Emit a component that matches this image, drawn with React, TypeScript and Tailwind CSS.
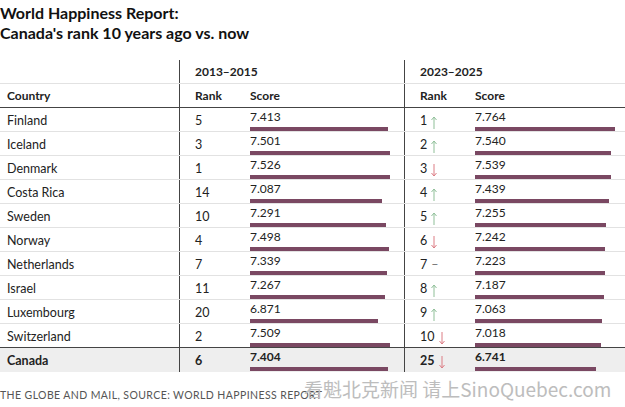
const rows = [
  { country: "Finland", r1: "5", s1: 7.413, r2: "1", t: "up", s2: 7.764 },
  { country: "Iceland", r1: "3", s1: 7.501, r2: "2", t: "up", s2: 7.54 },
  { country: "Denmark", r1: "1", s1: 7.526, r2: "3", t: "down", s2: 7.539 },
  { country: "Costa Rica", r1: "14", s1: 7.087, r2: "4", t: "up", s2: 7.439 },
  { country: "Sweden", r1: "10", s1: 7.291, r2: "5", t: "up", s2: 7.255 },
  { country: "Norway", r1: "4", s1: 7.498, r2: "6", t: "down", s2: 7.242 },
  { country: "Netherlands", r1: "7", s1: 7.339, r2: "7", t: "same", s2: 7.223 },
  { country: "Israel", r1: "11", s1: 7.267, r2: "8", t: "up", s2: 7.187 },
  { country: "Luxembourg", r1: "20", s1: 6.871, r2: "9", t: "up", s2: 7.063 },
  { country: "Switzerland", r1: "2", s1: 7.509, r2: "10", t: "down", s2: 7.018 },
];

const Trend = ({ t }: { t: string }) => {
  if (t === "same") {
    return <span className="ml-[4px] text-[#777]">–</span>;
  }
  const up = t === "up";
  return (
    <svg width="6" height="13" viewBox="0 0 6 13" className="ml-[4px] mt-[2px]">
      {up ? (
        <>
          <line x1="3" y1="1" x2="3" y2="13" stroke="#8fbf98" strokeWidth="1" />
          <polyline points="0.5,4 3,1 5.5,4" fill="none" stroke="#8fbf98" strokeWidth="1" />
        </>
      ) : (
        <>
          <line x1="3" y1="0" x2="3" y2="12" stroke="#dc7c84" strokeWidth="1" />
          <polyline points="0.5,9 3,12 5.5,9" fill="none" stroke="#dc7c84" strokeWidth="1" />
        </>
      )}
    </svg>
  );
};

const Score = ({ value, scale, bold }: { value: number; scale: number; bold?: boolean }) => (
  <div className="flex flex-col pt-[2px]">
    <span className={`leading-[14px] text-[12px] ${bold ? "font-bold" : ""}`}>{value.toFixed(3)}</span>
    <div className="mt-[3px] h-[4px] bg-[#7a4862]" style={{ width: value * scale }} />
  </div>
);

const Row = ({
  row,
  last,
  canada,
}: {
  row: (typeof rows)[number];
  last?: boolean;
  canada?: boolean;
}) => (
  <div
    className={`flex h-6 ${canada ? "bg-[#eeeeee] font-bold" : "border-b"} ${
      last ? "border-[#444]" : "border-[#e2e2e2]"
    }`}
  >
    <div className="w-[179px] pl-[7px] pt-[3px] flex items-center text-[12.5px]">{row.country}</div>
    <div className="w-[71px] border-l border-[#444] pl-[15px] pt-[3px] flex items-center text-[12.5px]">{row.r1}</div>
    <div className="w-[154px]">
      <Score value={row.s1} scale={18.6} bold={canada} />
    </div>
    <div className="w-[71px] border-l border-[#444] pl-[15px] pt-[3px] flex items-center text-[12.5px]">
      {row.r2}
      <Trend t={row.t} />
    </div>
    <div className="flex-1">
      <Score value={row.s2} scale={18.0} bold={canada} />
    </div>
  </div>
);

export default function App() {
  return (
    <div className="relative w-[625px] h-[407px] bg-white text-[#222] overflow-hidden" style={{ fontFamily: "Lato, 'Noto Sans', sans-serif" }}>
      {/* Title */}
      <div className="pt-[3px] h-[60px] text-[16px] font-bold leading-[20px] text-[#111]">
        <div>World Happiness Report:</div>
        <div>Canada's rank 10 years ago vs. now</div>
      </div>

      {/* Header */}
      <div className="flex h-6 border-b border-[#e2e2e2] font-bold text-[12px]">
        <div className="w-[179px]" />
        <div className="w-[225px] border-l border-[#444] pl-[15px] pt-[1px] flex items-center">2013–2015</div>
        <div className="flex-1 border-l border-[#444] pl-[15px] pt-[1px] flex items-center">2023–2025</div>
      </div>
      <div className="flex h-6 border-b border-[#444] font-bold text-[12px]">
        <div className="w-[179px] pl-[7px] flex items-center">Country</div>
        <div className="w-[71px] border-l border-[#444] pl-[15px] flex items-center">Rank</div>
        <div className="w-[154px] flex items-center">Score</div>
        <div className="w-[71px] border-l border-[#444] pl-[15px] flex items-center">Rank</div>
        <div className="flex-1 flex items-center">Score</div>
      </div>

      {/* Rows */}
      {rows.map((row, i) => (
        <Row key={row.country} row={row} last={i === rows.length - 1} />
      ))}
      <Row row={{ country: "Canada", r1: "6", s1: 7.404, r2: "25", t: "down", s2: 6.741 }} canada />

      {/* Footer */}
      <div className="mt-[17px] text-[10.5px] tracking-[0.4px] text-[#555] leading-[12px]">
        THE GLOBE AND MAIL, SOURCE: WORLD HAPPINESS REPORT
      </div>

      {/* Watermark */}
      <div
        className="absolute left-[304px] top-[377px] text-[19px] leading-[24px] text-[#bdbdbd] whitespace-nowrap"
        style={{ fontFamily: "'Noto Sans CJK SC', 'Noto Sans', sans-serif" }}
      >
        看魁北克新闻 请上SinoQuebec.com
      </div>
    </div>
  );
}
